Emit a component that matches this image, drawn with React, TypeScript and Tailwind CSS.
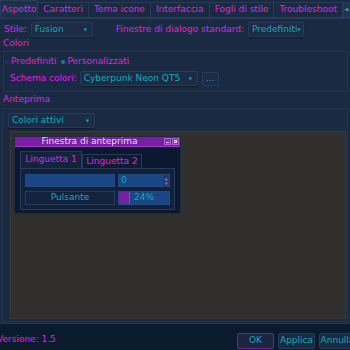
const tabs = ["Caratteri", "Tema icone", "Interfaccia", "Fogli di stile", "Troubleshoot"];

const Combo = ({ label, className }: { label: string; className: string }) => (
  <div
    className={`flex items-center justify-between h-[15px] px-[3px] bg-[#1c2c46] border border-[#2a3b58] rounded-[2px] shadow-[0_1px_1px_rgba(0,0,0,0.4)] text-[#19a9b8] ${className}`}
  >
    <span className="whitespace-nowrap">{label}</span>
    <span className="text-[4px] text-[#19a9b8] pr-[2px]">▼</span>
  </div>
);

const Preview = () => (
  <div className="w-[167px] h-[78px] ml-[3px] mt-[4px] flex flex-col bg-[#0a1830] border border-[#1c2a45]">
    <div className="h-[10px] flex items-center bg-[#7a1fa3] border-b border-[#9a3ac0] text-[#e6dcf5]">
      <span className="flex-1 text-center leading-none text-[9px]">Finestra di anteprima</span>
      <div className="flex gap-[1px] pr-[1px]">
        <div className="w-[7px] h-[7px] bg-[#8d2bb5] border border-[#b060d0] flex items-end justify-center">
          <div className="w-[3px] h-[1px] bg-[#e6dcf5] mb-[1px]" />
        </div>
        <div className="w-[7px] h-[7px] bg-[#8d2bb5] border border-[#b060d0] flex items-center justify-center">
          <div className="w-[3px] h-[3px] border border-[#e6dcf5]" />
        </div>
      </div>
    </div>
    <div className="flex flex-col px-[5px] pt-[4px]">
      <div className="flex items-end">
        <div className="h-[17px] w-[62px] flex items-center justify-center bg-[#13233d] border border-[#2a3b58] border-b-0 text-[#e11ee0]">
          Linguetta 1
        </div>
        <div className="h-[14px] w-[60px] flex items-center justify-center bg-[#0d1c34] border border-[#2a3b58] border-b-0 text-[#e11ee0]">
          Linguetta 2
        </div>
      </div>
      <div className="h-[42px] w-[155px] bg-[#11213a] border border-[#2a3b58] flex flex-col gap-[4px] px-[4px] pt-[5px]">
        <div className="flex gap-[3px] h-[13px]">
          <div className="w-[90px] bg-[#1a4686] border border-[#234a80]" />
          <div className="w-[52px] bg-[#1a4686] border border-[#234a80] flex items-center text-[#19a9b8]">
            <span className="flex-1 pl-[2px]">0</span>
            <div className="w-[6px] h-full flex flex-col items-center justify-center bg-[#163c72] text-[4px] leading-[5px] text-[#c050c0]">
              <span>▲</span>
              <span>▼</span>
            </div>
          </div>
        </div>
        <div className="flex gap-[3px] h-[14px]">
          <div className="w-[90px] bg-[#13233d] border border-[#2a3b58] flex items-center justify-center text-[#19a9b8]">
            Pulsante
          </div>
          <div className="w-[52px] bg-[#1a4686] border border-[#234a80] flex items-center text-[#19a9b8]">
            <div className="w-[11px] h-full bg-[#7a1fa3] border-r border-[#9a3ac0]" />
            <span className="pl-[4px]">24%</span>
          </div>
        </div>
      </div>
    </div>
  </div>
);

export default function App() {
  return (
    <div
      className="w-[350px] h-[350px] overflow-hidden flex flex-col bg-[#1a2a42] text-[9px] text-[#e11ee0]"
      style={{ fontFamily: '"DejaVu Sans", sans-serif' }}
    >
      <div className="h-[18px] flex items-end shrink-0">
        <div className="h-[18px] w-[45px] flex items-center justify-center bg-[#1e2f4a] border border-[#2a3b58] border-b-0">
          Aspetto
        </div>
        {tabs.map((t) => (
          <div
            key={t}
            className="h-[16px] px-[5px] flex items-center bg-[#1a2a42] border border-[#2a3b58] border-l-0 whitespace-nowrap"
          >
            {t}
          </div>
        ))}
        <div className="h-[16px] w-[7px] shrink-0 flex items-center justify-center bg-[#22334f] border border-[#2a3b58] text-[5px] text-[#19a9b8]">
          ◀
        </div>
      </div>

      <div className="h-[305px] flex flex-col border-t border-[#2a3b58] shrink-0">
        <div className="flex items-center h-[15px] mt-[3px] pl-[4px]">
          <span>Stile:</span>
          <Combo label="Fusion" className="w-[62px] ml-[4px]" />
          <span className="ml-[23px]">Finestre di dialogo standard:</span>
          <Combo label="Predefiniti" className="w-[56px] ml-[4px]" />
        </div>
        <div className="h-[14px] pl-[3px] flex items-center">Colori</div>
        <div className="h-[41px] ml-[3px] mr-[2px] border border-[#23344f] flex flex-col">
          <div className="h-[19px] flex items-center pl-[1px] gap-[2px]">
            <span className="w-[4px] h-[4px] rounded-full bg-[#17385e]" />
            <span>Predefiniti</span>
            <span className="w-[4px] h-[4px] rounded-full bg-[#1a7fa5] ml-[3px]" />
            <span>Personalizzati</span>
          </div>
          <div className="flex items-center pl-[6px]">
            <span>Schema colori:</span>
            <Combo label="Cyberpunk Neon QT5" className="w-[118px] ml-[3px]" />
            <div className="ml-[4px] w-[17px] h-[14px] bg-[#1c2c46] border border-[#2a3b58] rounded-[2px] flex items-center justify-center text-[#19a9b8] leading-none">
              ...
            </div>
          </div>
        </div>
        <div className="h-[16px] pl-[3px] flex items-center">Anteprima</div>
        <div className="flex-1 ml-[2px] mr-[2px] mb-[1px] border border-[#23344f] flex flex-col">
          <Combo label="Colori attivi" className="w-[87px] ml-[5px] mt-[4px]" />
          <div className="flex-1 ml-[7px] mr-[1px] mt-[3px] mb-[2px] bg-[#302f2e] border border-[#3a3938]">
            <Preview />
          </div>
        </div>
      </div>

      <div className="flex-1 bg-[#0c1a2e] flex items-center border-t border-[#23344f]">
        <span className="ml-[-3px] mt-[5px]">Versione: 1.5</span>
        <div className="ml-auto flex gap-[4px] mt-[7px] mr-[-6px]">
          <div className="w-[37px] h-[16px] flex items-center justify-center bg-[#1c2540] border border-[#6a2a8a] rounded-[2px] text-[#19a9b8]">
            OK
          </div>
          <div className="w-[37px] h-[16px] flex items-center justify-center bg-[#1a2a42] border border-[#2a3b58] rounded-[2px] text-[#19a9b8]">
            Applica
          </div>
          <div className="w-[37px] h-[16px] flex items-center justify-center bg-[#1a2a42] border border-[#2a3b58] rounded-[2px] text-[#19a9b8]">
            Annulla
          </div>
        </div>
      </div>
    </div>
  );
}
